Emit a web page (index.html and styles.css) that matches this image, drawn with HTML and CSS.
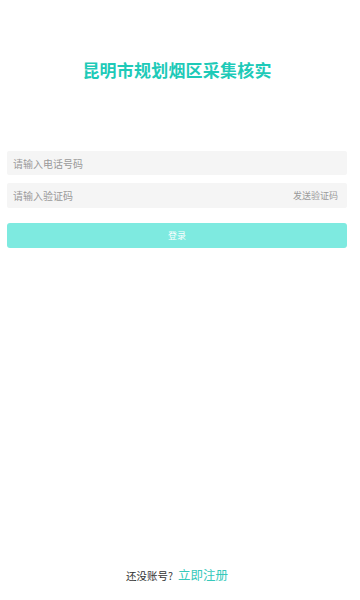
FILE: index.html
```html
<!DOCTYPE html>
<html lang="zh-CN">
<head>
<meta charset="utf-8">
<meta name="viewport" content="width=device-width, initial-scale=1">
<title>登录</title>
<link rel="stylesheet" href="styles.css">
</head>
<body>
<div class="page">
  <h1 class="title">昆明市规划烟区采集核实</h1>
  <form class="form">
    <div class="field">
      <input class="input" type="text" placeholder="请输入电话号码">
    </div>
    <div class="field field-code">
      <input class="input" type="text" placeholder="请输入验证码">
      <span class="send">发送验证码</span>
    </div>
    <button type="button" class="login">登录</button>
  </form>
  <div class="footer">
    <span class="no-account">还没账号?</span>
    <span class="register">立即注册</span>
  </div>
</div>
</body>
</html>
```

FILE: styles.css
```css
* {
  box-sizing: border-box;
}
html, body {
  margin: 0;
  padding: 0;
  background: #ffffff;
}
body {
  font-family: "Noto Sans CJK SC", "Noto Sans", sans-serif;
}
.page {
  width: 354px;
  min-height: 600px;
  display: flex;
  flex-direction: column;
}
.title {
  margin: 58px 0 0;
  text-align: center;
  font-size: 17px;
  line-height: 24px;
  font-weight: 700;
  color: #1ecab8;
  letter-spacing: 0.2px;
}
.form {
  margin: 69px 7px 0;
  display: flex;
  flex-direction: column;
}
.field {
  height: 24px;
  background: #f5f5f5;
  border-radius: 2px;
  display: flex;
  align-items: center;
  padding: 0 9px 0 6px;
}
.field-code {
  margin-top: 8px;
  height: 25px;
}
.input {
  flex: 1;
  min-width: 0;
  border: none;
  outline: none;
  background: transparent;
  font-family: inherit;
  font-size: 10px;
  color: #333;
  padding: 0;
}
.input::placeholder {
  color: #9a9a9a;
}
.send {
  font-size: 9px;
  color: #9a9a9a;
}
.login {
  margin-top: 15px;
  height: 25px;
  border: none;
  border-radius: 3px;
  background: #7eeae0;
  color: #ffffff;
  font-family: inherit;
  font-size: 9px;
  padding: 0;
}
.footer {
  margin-top: auto;
  padding-bottom: 14px;
  display: flex;
  justify-content: center;
  align-items: baseline;
  gap: 5px;
  line-height: 20px;
}
.no-account {
  font-size: 10.5px;
  color: #333333;
}
.register {
  font-size: 12.5px;
  color: #36c9bb;
}
```
